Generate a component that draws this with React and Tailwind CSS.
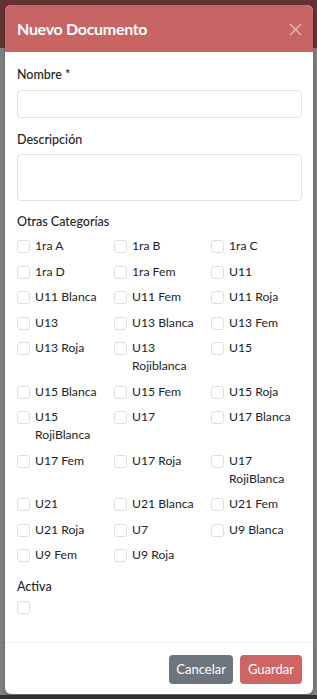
import React from "react";

const cats = [
  "1ra A", "1ra B", "1ra C",
  "1ra D", "1ra Fem", "U11",
  "U11 Blanca", "U11 Fem", "U11 Roja",
  "U13", "U13 Blanca", "U13 Fem",
  "U13 Roja", "U13 Rojiblanca", "U15",
  "U15 Blanca", "U15 Fem", "U15 Roja",
  "U15 RojiBlanca", "U17", "U17 Blanca",
  "U17 Fem", "U17 Roja", "U17 RojiBlanca",
  "U21", "U21 Blanca", "U21 Fem",
  "U21 Roja", "U7", "U9 Blanca",
  "U9 Fem", "U9 Roja",
];

function Box() {
  return (
    <span className="mt-[3px] block h-[13px] w-[13px] shrink-0 rounded-[3px] border border-[#dcdfe3] bg-white" />
  );
}

export default function App() {
  return (
    <div
      className="relative h-[699px] w-[317px] overflow-hidden"
      style={{ fontFamily: "Lato, 'Liberation Sans', sans-serif" }}
    >
      <div className="flex h-full flex-col">
        <div className="h-[48px] bg-[#643232]" />
        <div className="flex-1 bg-[#7f7f7f]" />
        <div className="h-[4px] bg-[#333333]" />
      </div>

      <div className="absolute left-[5px] top-[5px] flex h-[689px] w-[308px] flex-col overflow-hidden rounded-[6px] bg-white text-[#212529] shadow-[0_1px_3px_rgba(0,0,0,0.3)]">
        <div className="flex h-[47px] shrink-0 items-center justify-between bg-[#c96464] pl-[12px] pr-[11px]">
          <h1 className="text-[16px] font-bold leading-none tracking-[-0.3px] text-white">Nuevo Documento</h1>
          <svg width="13" height="13" viewBox="0 0 13 13" className="mt-[1px]">
            <path d="M1 1 L12 12 M12 1 L1 12" stroke="#e9b8b8" strokeWidth="1.3" />
          </svg>
        </div>

        <div className="flex-1 px-[12px] pt-[13px]">
          <label className="block text-[12.5px] font-medium leading-[20px]">Nombre *</label>
          <div className="mt-[5px] h-[28px] w-[285px] rounded-[4px] border border-[#dee2e6]" />

          <label className="mt-[12px] block text-[12.5px] font-medium leading-[20px]">Descripción</label>
          <div className="mt-[4px] h-[47px] w-[285px] rounded-[4px] border border-[#dee2e6]" />

          <label className="mt-[11px] block text-[12.5px] font-medium leading-[20px]">Otras Categorías</label>
          <div className="mt-[5px] grid grid-cols-[97px_97px_1fr] gap-y-[7.5px] text-[12.2px] leading-[18px]">
            {cats.map((c) => (
              <div key={c} className="flex gap-[5px]">
                <Box />
                <span className="max-w-[72px] pr-[2px]">{c}</span>
              </div>
            ))}
          </div>

          <label className="mt-[13px] block text-[12.5px] font-medium leading-[20px]">Activa</label>
          <div className="mt-[4px]">
            <Box />
          </div>
        </div>

        <div className="flex h-[52px] shrink-0 items-start justify-end gap-[7px] border-t border-[#eceef0] pr-[11px] pt-[12px]">
          <button className="h-[29px] rounded-[4px] bg-[#6c757d] px-[7px] text-[13px] text-white">Cancelar</button>
          <button className="h-[29px] rounded-[4px] bg-[#cd6565] px-[8px] text-[13px] text-white">Guardar</button>
        </div>
      </div>
    </div>
  );
}
